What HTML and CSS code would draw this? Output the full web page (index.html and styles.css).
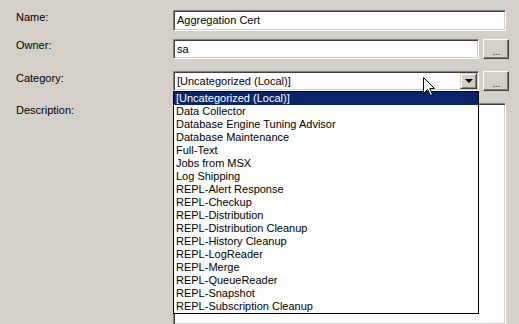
FILE: index.html
```
<html>
<head>
  <link rel="stylesheet" href="styles.css">
</head>
<body>
  <div class="job-form">
    <div class="form-row row-name">
      <label class="field-label">Name:</label>
      <div class="field">
        <div class="textbox wide">Aggregation Cert</div>
      </div>
    </div>

    <div class="form-row row-owner">
      <label class="field-label">Owner:</label>
      <div class="field">
        <div class="textbox">sa</div>
        <div class="dots-button">...</div>
      </div>
    </div>

    <div class="form-row row-category">
      <label class="field-label">Category:</label>
      <div class="field">
        <div class="combo">
          <span class="combo-text">[Uncategorized (Local)]</span>
          <span class="combo-arrow"></span>
          <ul class="dropdown-list">
            <li class="selected">[Uncategorized (Local)]</li>
            <li>Data Collector</li>
            <li>Database Engine Tuning Advisor</li>
            <li>Database Maintenance</li>
            <li>Full-Text</li>
            <li>Jobs from MSX</li>
            <li>Log Shipping</li>
            <li>REPL-Alert Response</li>
            <li>REPL-Checkup</li>
            <li>REPL-Distribution</li>
            <li>REPL-Distribution Cleanup</li>
            <li>REPL-History Cleanup</li>
            <li>REPL-LogReader</li>
            <li>REPL-Merge</li>
            <li>REPL-QueueReader</li>
            <li>REPL-Snapshot</li>
            <li>REPL-Subscription Cleanup</li>
          </ul>
          <!-- mouse pointer hovering the combo -->
          <svg class="cursor" width="13" height="20" viewBox="0 0 13 20">
            <path d="M0.5 0.5 L0.5 16.5 L4.5 12.5 L7.5 18.5 L9.5 17.5 L6.8 11.5 L11.5 11.5 Z" fill="#fff" stroke="#000" stroke-width="1"/>
          </svg>
        </div>
        <div class="dots-button">...</div>
      </div>
    </div>

    <div class="form-row row-description">
      <label class="field-label">Description:</label>
      <div class="field">
        <div class="textbox wide memo"></div>
      </div>
    </div>
  </div>
</body>
</html>
```

FILE: styles.css
```
body {
  margin: 0;
  background-color: #d4d0c8;
  font-family: 'Liberation Sans', Arial, sans-serif;
  font-size: 11px;
  color: #000;
  overflow: hidden;
}

.job-form {
  padding: 10px 0 0 16px;
}

.form-row {
  display: flex;
}

.row-owner {
  margin-top: 8px;
}

.row-category {
  margin-top: 12px;
}

.row-description {
  margin-top: 12px;
}

.field-label {
  width: 157px;
  line-height: 13px;
  padding-top: 1px;
}

.row-owner .field-label {
  padding-top: 0;
}

.field {
  display: flex;
  gap: 4px;
}

/* sunken 3d border, classic look */
.textbox,
.combo {
  box-sizing: border-box;
  width: 306px;
  height: 20px;
  background-color: #fff;
  border: 1px solid;
  border-color: #808080 #fff #fff #808080;
  box-shadow: inset 1px 1px 0 #404040, inset -1px -1px 0 #d4d0c8;
  padding: 0 3px 0 3px;
  line-height: 18px;
  white-space: nowrap;
}

.textbox.wide {
  width: 333px;
  height: 21px;
  line-height: 19px;
}

.textbox.memo {
  height: 221px;
  border-bottom: none;
}

.combo {
  position: relative;
  display: flex;
  align-items: center;
  justify-content: space-between;
  padding-right: 1px;
}

.combo-arrow {
  box-sizing: border-box;
  width: 17px;
  height: 16px;
  background-color: #d4d0c8;
  border: 1px solid;
  border-color: #d4d0c8 #404040 #404040 #d4d0c8;
  box-shadow: inset 1px 1px 0 #fff, inset -1px -1px 0 #808080;
  position: relative;
}

.combo-arrow::after {
  content: '';
  position: absolute;
  left: 4px;
  top: 5px;
  border-left: 4px solid transparent;
  border-right: 4px solid transparent;
  border-top: 4px solid #000;
}

.dots-button {
  box-sizing: border-box;
  width: 26px;
  height: 20px;
  background-color: #d4d0c8;
  border: 1px solid;
  border-color: #fff #404040 #404040 #fff;
  box-shadow: inset -1px -1px 0 #808080;
  text-align: center;
  line-height: 22px;
  font-size: 11px;
  color: #333;
  letter-spacing: -0.5px;
}

.dropdown-list {
  position: absolute;
  left: -1px;
  top: 19px;
  width: 306px;
  box-sizing: border-box;
  margin: 0;
  padding: 0;
  list-style: none;
  background-color: #fff;
  border: 1px solid #000;
  z-index: 2;
}

.dropdown-list li {
  height: 13px;
  line-height: 13px;
  padding-left: 2px;
  white-space: nowrap;
}

.dropdown-list li.selected {
  background-color: #0a246a;
  color: #fff;
}

.cursor {
  position: absolute;
  left: 249px;
  top: 5px;
  z-index: 3;
}
```
